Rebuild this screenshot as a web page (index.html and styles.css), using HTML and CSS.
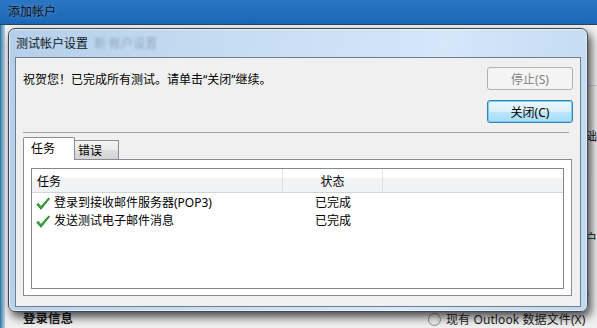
FILE: index.html
```html
<!DOCTYPE html>
<html lang="zh-CN">
<head>
    <meta charset="UTF-8">
    <title>测试帐户设置</title>
    <link rel="stylesheet" href="styles.css">
</head>
<body>
    <div class="desktop">
        <div class="outer">
            <div class="outer-title">添加帐户</div>
            <div class="outer-body">
                <div class="outer-frame"></div>
                <div class="outer-content">
                    <div class="peek">
                        <div class="peek-line"></div>
                        <div class="peek-text peek-1">础</div>
                        <div class="peek-text peek-2">户</div>
                        <div class="peek-text peek-3">)</div>
                    </div>
                    <div class="bottom-row">
                        <span class="section-label">登录信息</span>
                        <span class="radio-opt"><span class="radio"></span>现有 Outlook 数据文件(X)</span>
                    </div>
                </div>
            </div>
        </div>

        <div class="dialog">
            <div class="dialog-title">测试帐户设置<span class="ghost">新 帐户设置</span></div>
            <div class="client">
                <div class="top">
                    <p class="message">祝贺您！已完成所有测试。请单击“关闭”继续。</p>
                    <div class="buttons">
                        <button class="btn" disabled>停止(S)</button>
                        <button class="btn btn-default">关闭(C)</button>
                    </div>
                </div>
                <div class="separator"></div>
                <div class="tabs">
                    <div class="tab active">任务</div>
                    <div class="tab">错误</div>
                </div>
                <div class="tab-panel">
                    <div class="list">
                        <div class="list-head">
                            <div class="col col-task">任务</div>
                            <div class="col col-status">状态</div>
                            <div class="col col-rest"></div>
                        </div>
                        <div class="rows">
                            <div class="row">
                                <div class="col col-task">
                                    <svg class="check" width="14" height="13" viewBox="0 0 14 13">
                                        <polygon points="0.3,7.6 2.3,5.9 5,8.9 12.6,0.4 14,1.7 5,12.7" fill="#1d7f1d"/>
                                        <polygon points="1.3,7.5 2.3,6.7 5,9.8 12.8,1.2 13.3,1.7 5,11.4" fill="#47a847"/>
                                    </svg>
                                    登录到接收邮件服务器(POP3)
                                </div>
                                <div class="col col-status">已完成</div>
                            </div>
                            <div class="row">
                                <div class="col col-task">
                                    <svg class="check" width="14" height="13" viewBox="0 0 14 13">
                                        <polygon points="0.3,7.6 2.3,5.9 5,8.9 12.6,0.4 14,1.7 5,12.7" fill="#1d7f1d"/>
                                        <polygon points="1.3,7.5 2.3,6.7 5,9.8 12.8,1.2 13.3,1.7 5,11.4" fill="#47a847"/>
                                    </svg>
                                    发送测试电子邮件消息
                                </div>
                                <div class="col col-status">已完成</div>
                            </div>
                        </div>
                    </div>
                </div>
            </div>
        </div>
    </div>
</body>
</html>
```

FILE: styles.css
```css
body {
    margin: 0;
    font-family: "Noto Sans", "Noto Sans CJK SC", sans-serif;
    font-size: 12px;
    color: #000;
    overflow: hidden;
}

.desktop {
    position: relative;
    width: 597px;
    height: 328px;
    overflow: hidden;
}

/* window behind the dialog */
.outer {
    display: flex;
    flex-direction: column;
    height: 328px;
}

.outer-title {
    height: 25px;
    line-height: 24px;
    padding-left: 8px;
    color: #111;
    text-shadow: 0 0 5px rgba(255, 255, 255, 0.35);
    background: linear-gradient(to bottom, #2a76c5, #1b67b7);
    border-bottom: 1px solid #26425f;
}

.outer-body {
    flex: 1;
    display: flex;
}

.outer-frame {
    width: 8px;
    background: linear-gradient(to right, #2f6f94 0, #63a3c6 2px, #a8c0da 4px, #c5d6e8 8px);
}

.outer-content {
    flex: 1;
    display: flex;
    flex-direction: column;
    background: #f0f0f0;
}

.peek {
    margin-left: 580px;
}

.peek-line {
    margin-top: 60px;
    height: 1px;
    background: #c9d3dc;
}

.peek-text {
    line-height: 16px;
    color: #111;
}

.peek-1 { margin-top: 43px; }
.peek-2 { margin-top: 86px; }
.peek-3 { margin-top: 39px; }

.bottom-row {
    display: flex;
    align-items: center;
    margin-top: 8px;
    height: 18px;
    padding-left: 18px;
}

.section-label {
    font-weight: bold;
    font-size: 12.5px;
    color: #1a1a1a;
    margin-top: -3px;
}

.radio-opt {
    display: flex;
    align-items: center;
    margin-left: 355px;
    color: #1a1a1a;
    letter-spacing: 0.1px;
}

.radio {
    width: 11px;
    height: 11px;
    border: 1px solid #8e8f8f;
    border-radius: 50%;
    margin-right: 5px;
    background: radial-gradient(circle at 40% 40%, #fff, #dcdcdc);
}

/* the dialog window on top */
.dialog {
    position: absolute;
    left: 8px;
    top: 28px;
    width: 580px;
    height: 284px;
    box-sizing: border-box;
    padding: 0 6px 4px 6px;
    border: 1px solid #3e4955;
    border-radius: 7px;
    background: linear-gradient(100deg, #b5cfea 0%, #c6dcf2 35%, #d5e7f9 70%, #c0d8f0 100%);
    box-shadow: inset 0 0 0 1px rgba(255, 255, 255, 0.55), 3px 5px 10px rgba(0, 0, 0, 0.7);
}

.dialog-title {
    height: 28px;
    line-height: 29px;
    padding-left: 1px;
    color: #0e1620;
}

.ghost {
    margin-left: 6px;
    color: rgba(30, 45, 70, 0.28);
    filter: blur(1.2px);
}

.client {
    height: 250px;
    box-sizing: border-box;
    border: 1px solid #6f7c8b;
    background: #f0f0f0;
    display: flex;
    flex-direction: column;
}

.top {
    display: flex;
    justify-content: space-between;
    padding: 9px 7px 0 7px;
}

.message {
    margin: 5px 0 0 0;
    line-height: 16px;
}

.buttons {
    display: flex;
    flex-direction: column;
    gap: 10px;
}

.btn {
    width: 86px;
    height: 23px;
    font-family: inherit;
    font-size: 12px;
    padding: 0;
    border-radius: 3px;
    border: 1px solid #adb2b5;
    background: #f4f4f4;
    color: #838383;
}

.btn-default {
    border-color: #3c7fb1;
    color: #000;
    background: linear-gradient(to bottom, #eaf6fd 0, #d9f0fc 50%, #bee6fd 50%, #a9daf5 100%);
    box-shadow: inset 0 0 0 1px #6fd3f8;
}

.separator {
    margin: 9px 11px 0 7px;
    height: 1px;
    background: #a0a0a0;
}

.tabs {
    display: flex;
    align-items: flex-end;
    margin: 4px 0 0 7px;
    height: 22px;
}

.tab {
    box-sizing: border-box;
    border: 1px solid #898c95;
    border-bottom: none;
    line-height: 16px;
}

.tab.active {
    position: relative;
    z-index: 1;
    width: 52px;
    height: 23px;
    margin-bottom: -1px;
    padding: 3px 0 0 7px;
    background: #fff;
    border-radius: 2px 2px 0 0;
}

.tab:not(.active) {
    width: 44px;
    height: 19px;
    padding: 2px 0 0 3px;
    border-left: none;
    background: linear-gradient(to bottom, #f3f3f3 0, #ebebeb 50%, #dedede 50%, #d3d3d3 100%);
}

.tab-panel {
    margin: 0 8px 0 7px;
    height: 137px;
    box-sizing: border-box;
    border: 1px solid #898c95;
    background: #fff;
    padding: 8px 7px 6px 7px;
}

.list {
    height: 121px;
    box-sizing: border-box;
    border: 1px solid #828790;
    background: #fff;
}

.list-head {
    display: flex;
    height: 24px;
    box-sizing: border-box;
    border-bottom: 1px solid #d5d5d5;
    background: linear-gradient(to bottom, #fff 0, #fff 40%, #f3f4f6 40%, #f1f2f4 100%);
}

.list-head .col {
    padding-top: 2px;
    line-height: 21px;
}

.list-head .col-task,
.list-head .col-status {
    border-right: 1px solid #e2e3e5;
}

.col {
    box-sizing: border-box;
}

.col-task {
    width: 251px;
    padding-left: 5px;
}

.col-status {
    width: 100px;
    text-align: center;
}

.col-rest {
    flex: 1;
}

.rows {
    padding-top: 1px;
}

.row {
    display: flex;
    height: 18px;
    line-height: 18px;
}

.row .col-task {
    display: flex;
    align-items: center;
    padding-left: 4px;
}

.check {
    margin-right: 4px;
}
```
